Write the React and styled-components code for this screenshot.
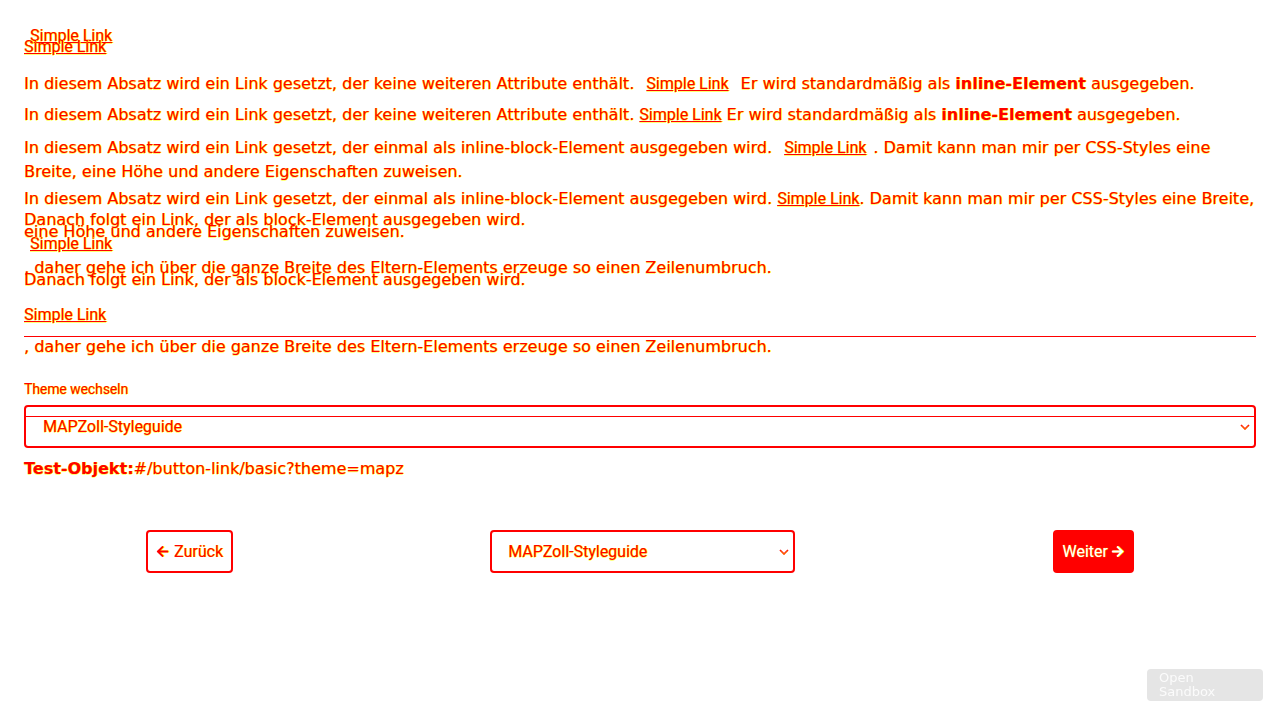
import React from 'react';
import styled, { createGlobalStyle } from 'styled-components';
import { FaArrowLeft, FaArrowRight } from 'react-icons/fa';

const Global = createGlobalStyle`
  html, body { margin: 0; padding: 0; background: #ffffff; }
  body {
    font-family: "DejaVu Sans", "Noto Sans", sans-serif;
    font-size: 16px;
    color: #ff0000;
  }
  * { box-sizing: border-box; }
`;

const ink = `
  color: #ff0000;
  text-shadow: 1px 0 0 #ffff00, 0 1px 0 rgba(255, 255, 0, 0.55);
`;

const Stage = styled.div`
  display: grid;
  width: 1280px;
  padding: 0 24px;
`;

const Layer = styled.div`
  grid-area: 1 / 1;
  display: flex;
  flex-direction: column;
  min-width: 0;
`;

const Para = styled.p`
  margin: ${(p) => p.$mt || 0}px 0 0;
  line-height: ${(p) => p.$lh || 24}px;
  font-size: 16px;
  ${ink}
`;

const BlockLink = styled.a`
  align-self: ${(p) => (p.$rule ? 'stretch' : 'flex-start')};
  margin: ${(p) => p.$mt || 0}px 0 0 ${(p) => p.$indent || 0}px;
  font-family: Roboto, "Liberation Sans", sans-serif;
  font-size: 16px;
  line-height: 18px;
  text-decoration: underline;
  ${ink}
  ${(p) =>
    p.$rule &&
    `
    padding-bottom: 12px;
    border-bottom: 1px solid #ff0000;
  `}
`;

const InlineLink = styled.a`
  font-family: Roboto, "Liberation Sans", sans-serif;
  font-size: 16px;
  line-height: 18px;
  text-decoration: underline;
  ${ink}
  margin: 0 ${(p) => (p.$spaced ? 7 : 0)}px;
  ${(p) =>
    p.$tall &&
    `
    display: inline-block;
    padding-bottom: 12px;
  `}
`;

const Strong = styled.strong`
  font-weight: 700;
`;

const Label = styled.label`
  margin-top: 24px;
  font-family: Roboto, "Liberation Sans", sans-serif;
  font-size: 14px;
  line-height: 16px;
  letter-spacing: -0.1px;
  ${ink}
`;

const SelectWrap = styled.div`
  position: relative;
  margin-top: ${(p) => p.$mt || 0}px;
  width: ${(p) => (p.$w ? `${p.$w}px` : '100%')};
  height: ${(p) => p.$h || 43}px;
  flex-shrink: 0;
  ${(p) =>
    p.$seam &&
    `
    &::before {
      content: '';
      position: absolute;
      left: 0;
      right: 2px;
      top: 11px;
      height: 1px;
      background: #ff0000;
      pointer-events: none;
      z-index: 1;
    }
  `}
`;

const Select = styled.select`
  appearance: none;
  -webkit-appearance: none;
  width: 100%;
  height: 100%;
  border: 2px solid #ff0000;
  border-radius: 4px;
  background: #ffffff;
  padding: 0 32px 0 ${(p) => p.$pl || 16}px;
  font-family: Roboto, "Liberation Sans", sans-serif;
  font-size: 16px;
  outline: none;
  ${ink}
`;

const Chevron = styled.svg`
  position: absolute;
  right: ${(p) => p.$right}px;
  top: 50%;
  margin-top: -3px;
  width: 10px;
  height: 6px;
  pointer-events: none;
`;

const TestLine = styled.div`
  margin-top: 9px;
  line-height: 24px;
  font-size: 16px;
  ${ink}
`;

const BottomBar = styled.div`
  margin-top: 49px;
  padding: 0 122px;
  display: flex;
  justify-content: space-between;
  align-items: center;
`;

const Button = styled.button`
  height: 43px;
  display: inline-flex;
  align-items: center;
  gap: ${(p) => (p.$primary ? 3 : 5)}px;
  padding: 0 8px;
  border: 2px solid #ff0000;
  border-radius: 4px;
  background: ${(p) => (p.$primary ? '#ff0000' : '#ffffff')};
  font-family: Roboto, "Liberation Sans", sans-serif;
  font-size: 16px;
  line-height: 18px;
  color: ${(p) => (p.$primary ? '#ffffff' : '#ff0000')};
  text-shadow: ${(p) => (p.$primary ? '0 0 1px #ffff00' : '1px 0 0 #ffff00')};
  cursor: pointer;
  svg {
    width: 13px;
    height: 13px;
    filter: drop-shadow(1px 0 0 #ffff00);
  }
`;

const Sandbox = styled.button`
  position: fixed;
  right: 17px;
  bottom: 19px;
  width: 116px;
  height: 32px;
  padding: 2px 12px;
  border: none;
  border-radius: 4px;
  background: #e5e5e5;
  color: rgba(255, 255, 255, 0.85);
  font-family: "DejaVu Sans", sans-serif;
  font-size: 13px;
  line-height: 14px;
  text-align: left;
  overflow: visible;
  display: block;
`;

const ChevronIcon = ({ right }) => (
  <Chevron $right={right} viewBox="0 0 10 6">
    <path d="M1 1 L5 5 L9 1" fill="none" stroke="#ff0000" strokeWidth="1.6" />
    <path d="M1.5 2 L5 5.4 L8.5 2" fill="none" stroke="#ffff00" strokeWidth="0.6" />
  </Chevron>
);

export default function App() {
  return (
    <>
      <Global />
      <Stage>
        <Layer>
          <BlockLink href="#" $mt={27} $indent={6}>Simple Link</BlockLink>
          <Para $mt={27}>
            In diesem Absatz wird ein Link gesetzt, der keine weiteren Attribute enthält.{' '}
            <InlineLink href="#" $spaced>Simple Link</InlineLink> Er wird standardmäßig als{' '}
            <Strong>inline-Element</Strong> ausgegeben.
          </Para>
          <Para $mt={40}>
            In diesem Absatz wird ein Link gesetzt, der einmal als inline-block-Element ausgegeben wird.{' '}
            <InlineLink href="#" $spaced>Simple Link</InlineLink>. Damit kann man mir per CSS-Styles eine
            Breite, eine Höhe und andere Eigenschaften zuweisen.
          </Para>
          <Para $mt={24}>Danach folgt ein Link, der als block-Element ausgegeben wird.</Para>
          <BlockLink href="#" $mt={3} $indent={6}>Simple Link</BlockLink>
          <Para $mt={3}>
            , daher gehe ich über die ganze Breite des Eltern-Elements erzeuge so einen Zeilenumbruch.
          </Para>
        </Layer>

        <Layer>
          <BlockLink href="#" $mt={38}>Simple Link</BlockLink>
          <Para $mt={47}>
            In diesem Absatz wird ein Link gesetzt, der keine weiteren Attribute enthält.{' '}
            <InlineLink href="#">Simple Link</InlineLink> Er wird standardmäßig als{' '}
            <Strong>inline-Element</Strong> ausgegeben.
          </Para>
          <Para $mt={60}>
            In diesem Absatz wird ein Link gesetzt, der einmal als inline-block-Element ausgegeben wird.{' '}
            <InlineLink href="#" $tall>Simple Link</InlineLink>. Damit kann man mir per CSS-Styles eine
            Breite, eine Höhe und andere Eigenschaften zuweisen.
          </Para>
          <Para $mt={24}>Danach folgt ein Link, der als block-Element ausgegeben wird.</Para>
          <BlockLink href="#" $mt={14} $rule>Simple Link</BlockLink>
          <Para $lh={20}>
            , daher gehe ich über die ganze Breite des Eltern-Elements erzeuge so einen Zeilenumbruch.
          </Para>

          <Label htmlFor="theme">Theme wechseln</Label>
          <SelectWrap $mt={8} $seam>
            <Select id="theme" defaultValue="mapz" $pl={17}>
              <option value="mapz">MAPZoll-Styleguide</option>
            </Select>
            <ChevronIcon right={6} />
          </SelectWrap>
          <TestLine>
            <Strong>Test-Objekt:</Strong>#/button-link/basic?theme=mapz
          </TestLine>

          <BottomBar>
            <Button type="button">
              <FaArrowLeft />
              Zurück
            </Button>
            <SelectWrap $w={305} $h={43}>
              <Select defaultValue="mapz">
                <option value="mapz">MAPZoll-Styleguide</option>
              </Select>
              <ChevronIcon right={6} />
            </SelectWrap>
            <Button type="button" $primary>
              Weiter
              <FaArrowRight />
            </Button>
          </BottomBar>
        </Layer>
      </Stage>
      <Sandbox type="button">Open Sandbox</Sandbox>
    </>
  );
}
